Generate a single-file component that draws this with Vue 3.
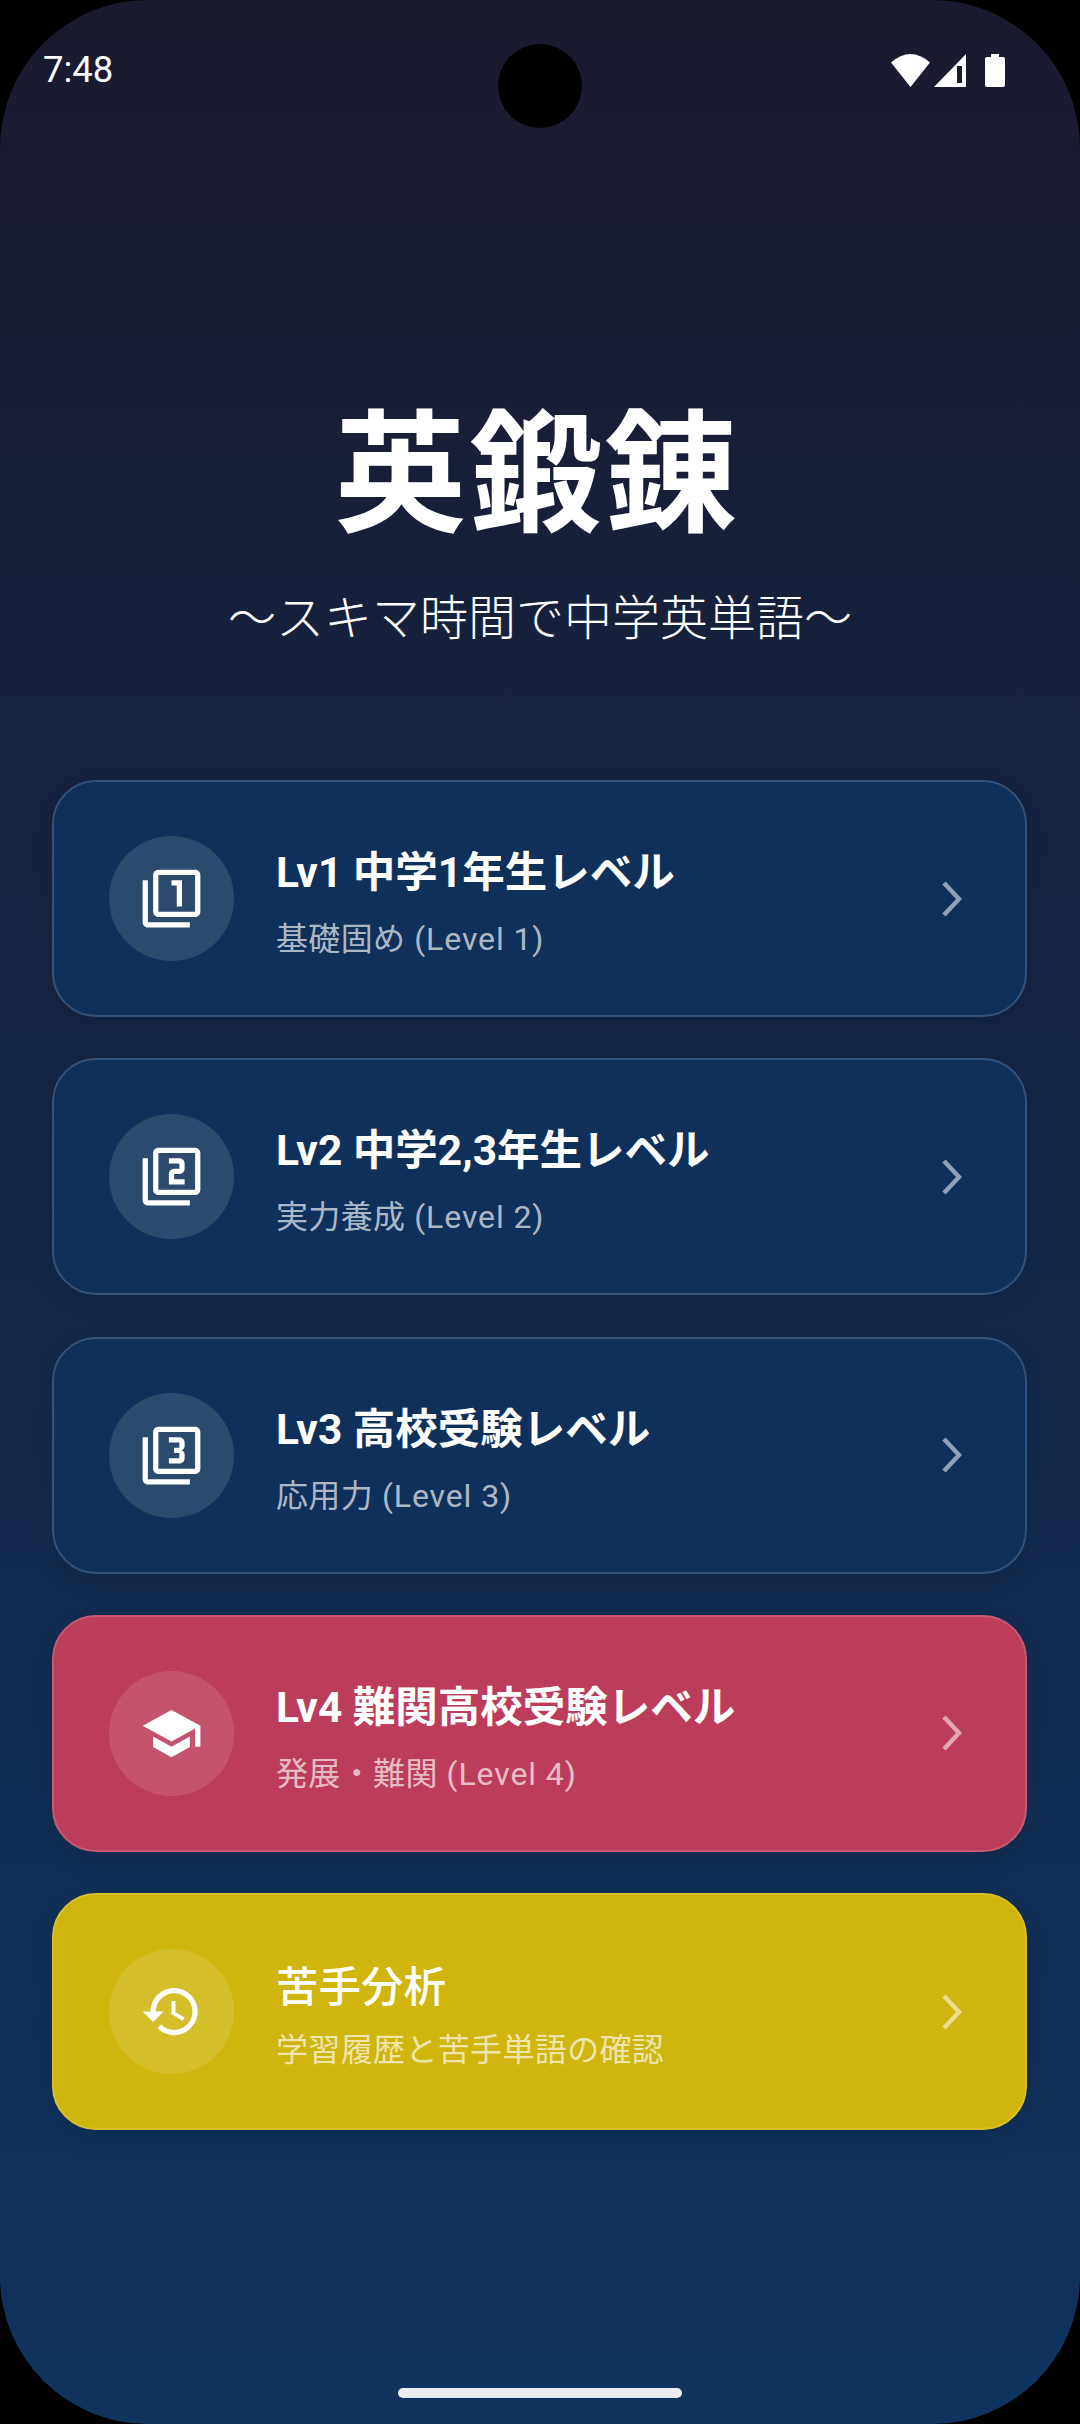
<script setup>
const cards = [
  { cls: 'navy', icon: 'one', title: 'Lv1 中学1年生レベル', sub: '基礎固め', level: ' (Level 1)' },
  { cls: 'navy', icon: 'two', title: 'Lv2 中学2,3年生レベル', sub: '実力養成', level: ' (Level 2)' },
  { cls: 'navy', icon: 'three', title: 'Lv3 高校受験レベル', sub: '応用力', level: ' (Level 3)' },
  { cls: 'rose', icon: 'school', title: 'Lv4 難関高校受験レベル', sub: '発展・難関', level: ' (Level 4)' },
  { cls: 'gold', icon: 'history', title: '苦手分析', sub: '学習履歴と苦手単語の確認', level: '' },
]
const paths = {
  one: 'M3 5H1v16c0 1.1.9 2 2 2h16v-2H3V5zm11 10h2V5h-4v2h2v8zm7-14H7c-1.1 0-2 .9-2 2v14c0 1.1.9 2 2 2h14c1.1 0 2-.9 2-2V3c0-1.1-.9-2-2-2zm0 16H7V3h14v14z',
  two: 'M3 5H1v16c0 1.1.9 2 2 2h16v-2H3V5zm18-4H7c-1.1 0-2 .9-2 2v14c0 1.1.9 2 2 2h14c1.1 0 2-.9 2-2V3c0-1.1-.9-2-2-2zm0 16H7V3h14v14zm-4-4h-4v-2h2c1.1 0 2-.89 2-2V7c0-1.11-.9-2-2-2h-4v2h4v2h-2c-1.1 0-2 .89-2 2v4h6v-2z',
  three: 'M21 1H7c-1.1 0-2 .9-2 2v14c0 1.1.9 2 2 2h14c1.1 0 2-.9 2-2V3c0-1.1-.9-2-2-2zm0 16H7V3h14v14zM3 5H1v16c0 1.1.9 2 2 2h16v-2H3V5zm14 8v-1.5c0-.83-.67-1.5-1.5-1.5.83 0 1.5-.67 1.5-1.5V7c0-1.11-.9-2-2-2h-4v2h4v2h-2v2h2v2h-4v2h4c1.1 0 2-.89 2-2z',
  school: 'M5 13.18v4L12 21l7-3.82v-4L12 17l-7-3.82zM12 3 1 9l11 6 9-4.91V17h2V9L12 3z',
  history: 'M13 3c-4.97 0-9 4.03-9 9H1l3.89 3.89.07.14L9 12H6c0-3.87 3.13-7 7-7s7 3.13 7 7-3.13 7-7 7c-1.93 0-3.68-.79-4.94-2.06l-1.42 1.42C8.27 19.99 10.51 21 13 21c4.97 0 9-4.03 9-9s-4.03-9-9-9zm-1 5v5l4.28 2.54.72-1.21-3.5-2.08V8H12z',
}
</script>

<template>
  <div class="bezel">
    <main class="screen">
      <header class="status">
        <span class="time">7:48</span>
        <span class="camera"></span>
        <span class="sys">
          <svg class="wifi" viewBox="0 0 39 33"><path d="M19.5 33 0 8.5Q19.5-8.5 39 8.5L19.5 33z" fill="#fff"/></svg>
          <svg class="signal" viewBox="0 0 32 33"><path d="M32 0v33H0L32 0zM23 12v17h5V12h-5z" fill="#fff" fill-rule="evenodd"/></svg>
          <svg class="battery" viewBox="0 0 20 33"><path d="M6 0h8v3h4c1.1 0 2 .9 2 2v26c0 1.1-.9 2-2 2H2c-1.1 0-2-.9-2-2V5c0-1.1.9-2 2-2h4V0z" fill="#fff"/></svg>
        </span>
      </header>

      <section class="hero">
        <h1>英鍛錬</h1>
        <p>～スキマ時間で中学英単語～</p>
      </section>

      <section class="cards">
        <article v-for="card in cards" :key="card.title" class="card" :class="card.cls">
          <div class="badge">
            <svg viewBox="0 0 24 24"><path :d="paths[card.icon]" fill="#fff"/></svg>
          </div>
          <div class="copy">
            <h2>{{ card.title }}</h2>
            <p>{{ card.sub }}<span class="level">{{ card.level }}</span></p>
          </div>
          <svg class="chev" viewBox="0 0 20 36"><path d="M2 2 17 18 2 34" fill="none" stroke="currentColor" stroke-width="4.5"/></svg>
        </article>
      </section>

      <div class="home"></div>
    </main>
  </div>
</template>

<style scoped>
.bezel { width: 1080px; height: 2424px; background: #000; overflow: hidden; }
.screen {
  position: relative;
  width: 1080px; height: 2424px;
  border-radius: 148px;
  overflow: hidden;
  background: linear-gradient(180deg, #1a1a2e 0%, #0f3460 100%);
  color: #fff;
  font-family: Roboto, "Noto Sans CJK JP", sans-serif;
}
.status { display: flex; justify-content: space-between; align-items: flex-start; height: 399px; padding: 50px 75px 0 43px; box-sizing: border-box; }
.time { font-size: 36.5px; line-height: 40px; }
.camera { position: absolute; left: 498px; top: 44px; width: 84px; height: 84px; border-radius: 50%; background: #000; }
.sys { display: flex; align-items: flex-start; padding-top: 4px; }
.wifi { width: 39px; height: 33px; }
.signal { width: 32px; height: 33px; margin-left: 4px; }
.battery { width: 20px; height: 33px; margin-left: 19px; }
.hero { text-align: center; }
.hero h1 { margin: 0; padding-right: 6px; font-size: 132px; line-height: 154px; font-weight: 700; letter-spacing: 3px; }
.hero p { margin: 37px 0 0; font-size: 48px; line-height: 58px; font-weight: 300; color: #fff; }
.cards { display: flex; flex-direction: column; gap: 41.25px; padding: 0 53px 0 52px; margin-top: 132px; }
.card {
  display: flex; align-items: center;
  height: 237px; box-sizing: border-box;
  padding: 0 63px 0 54.5px;
  border-radius: 44px;
  border: 2.75px solid;
  box-shadow: 0 8px 22px rgba(0,0,0,.1);
}
.navy { background: #0f305a; border-color: #35527a; }
.rose { background: #bc3d5b; border-color: #c75a73; }
.gold { background: #cfb50d; border-color: #d8c02e; }
.badge { width: 125px; height: 125px; border-radius: 50%; background: rgba(255,255,255,.12); display: flex; align-items: center; justify-content: center; flex: none; }
.badge svg { width: 63px; height: 63px; }
.copy { margin-left: 42.5px; flex: 1; padding-top: 8px; }
.copy h2 { margin: 0; font-size: 42.5px; line-height: 56px; font-weight: 700; color: #fff; }
.copy p { margin: 17px 0 0; font-size: 32px; line-height: 42px; font-weight: 400; letter-spacing: .35px; color: rgba(255,255,255,.68); }
.level { letter-spacing: .9px; }
.gold .copy h2 { font-weight: 500; }
.gold .copy p { margin-top: 13.6px; }
.chev { width: 20px; height: 36px; flex: none; color: rgba(255,255,255,.55); }
.home { position: absolute; left: 398px; top: 2388px; width: 284px; height: 10px; border-radius: 5px; background: #e9edf0; }
</style>
